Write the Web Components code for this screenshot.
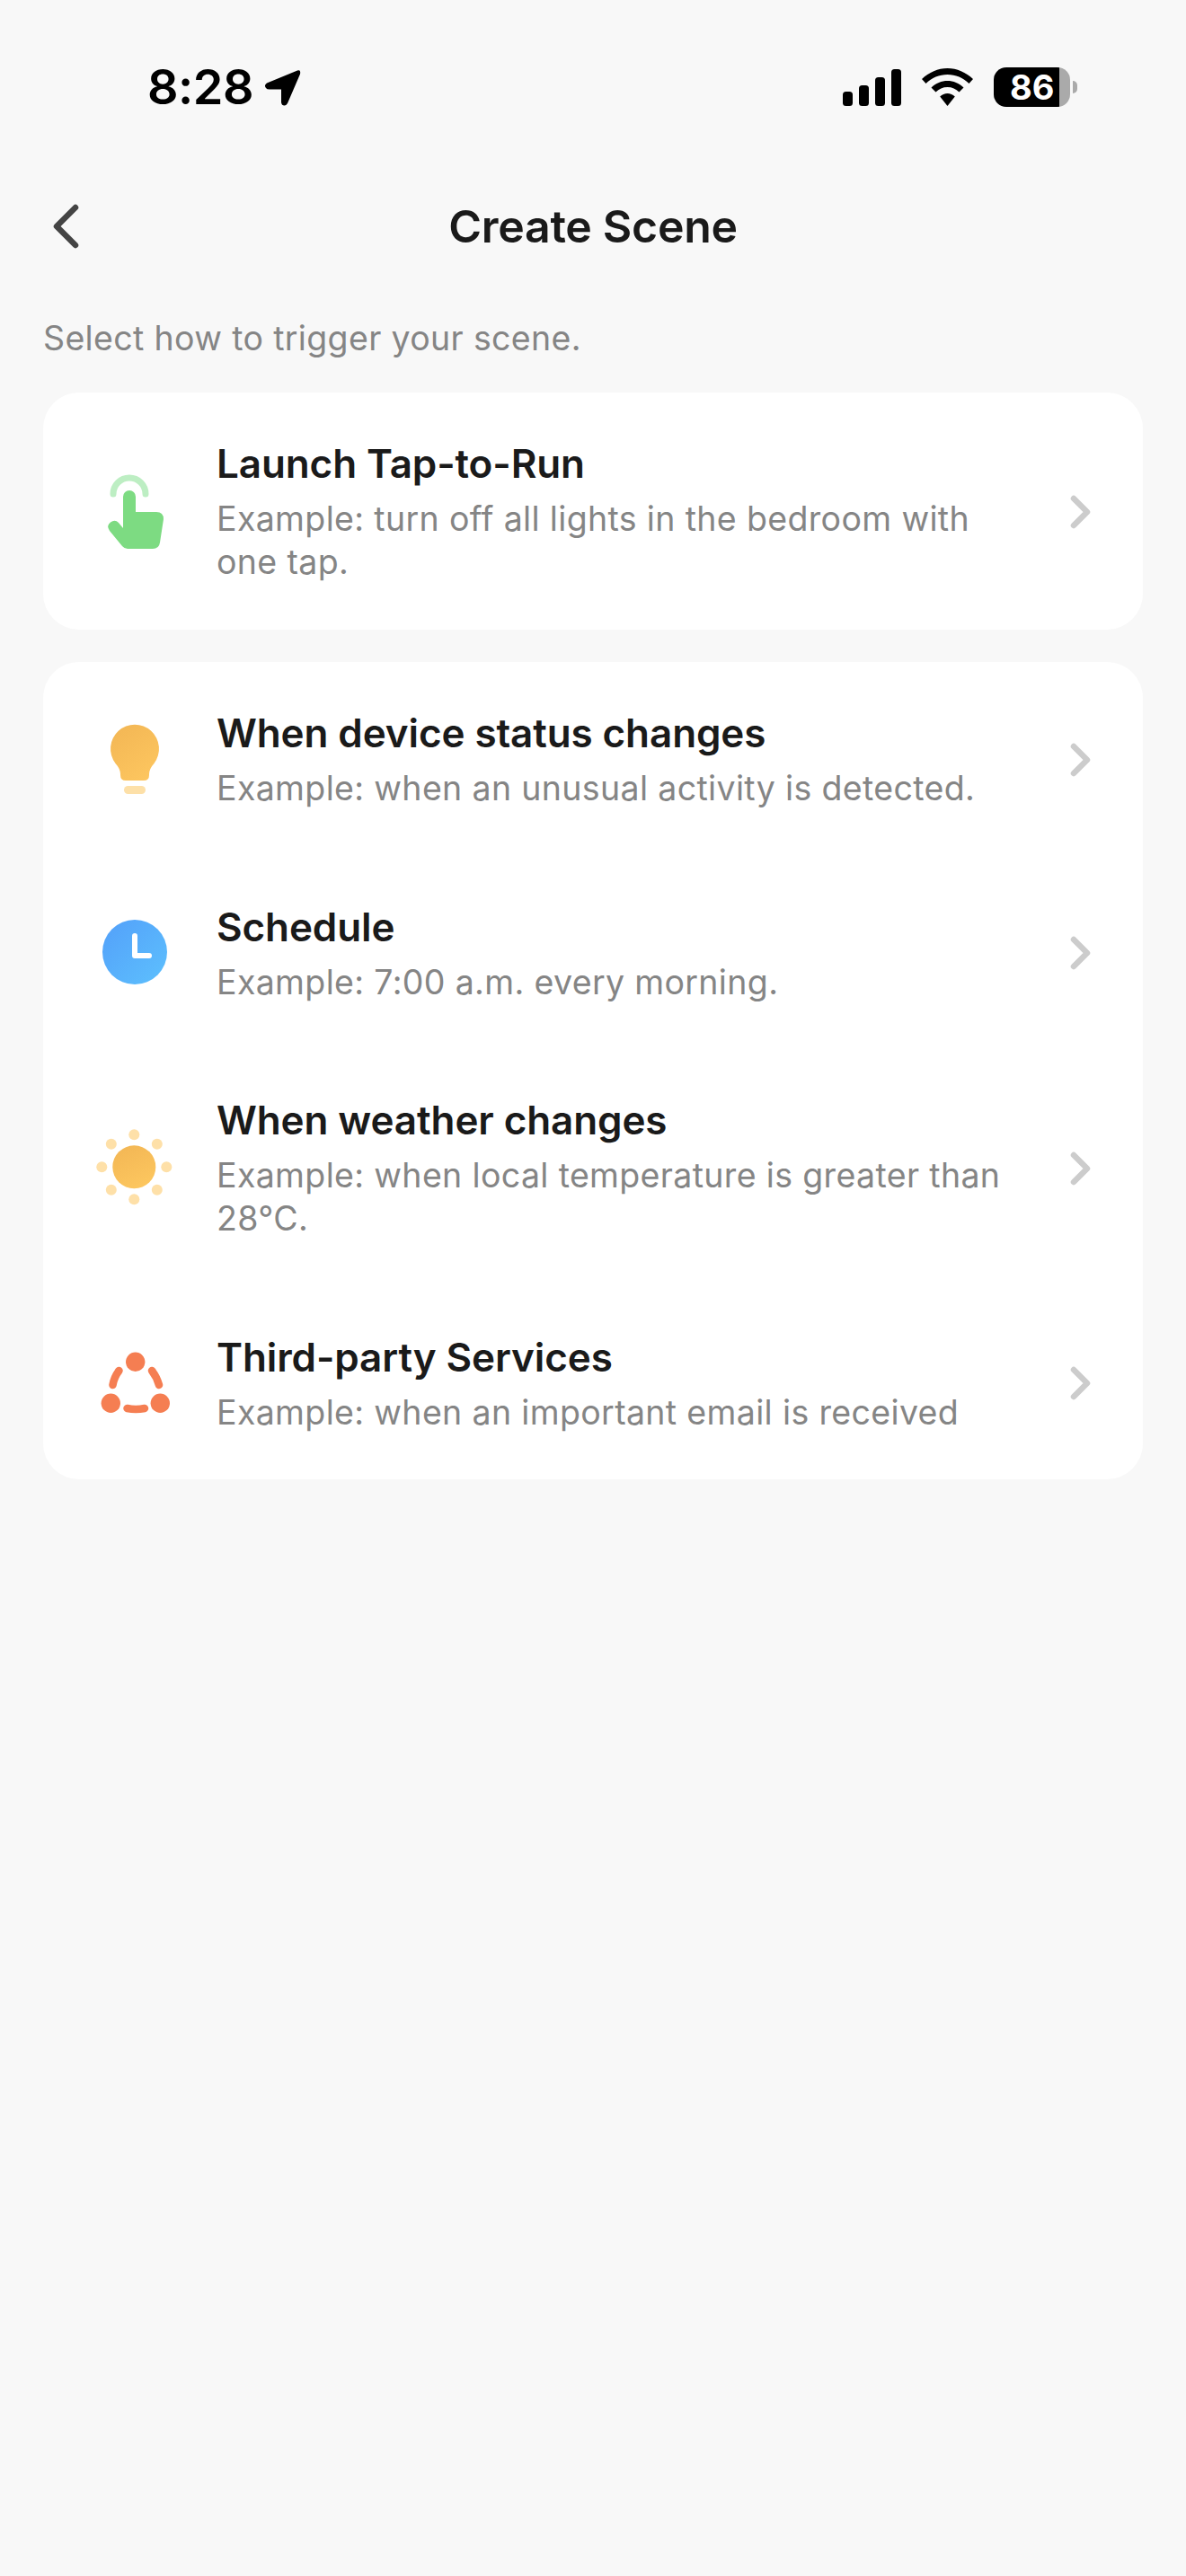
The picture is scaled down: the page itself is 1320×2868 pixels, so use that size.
<!DOCTYPE html>
<html>
<head>
<meta charset="utf-8">
<style>
  html, body { margin: 0; background: #f8f8f8; }
  body { font-family: Inter, "Liberation Sans", sans-serif; width: 1320px; min-height: 2868px; }
</style>
</head>
<body>
<status-bar time="8:28" battery="86"></status-bar>
<nav-bar title="Create Scene"></nav-bar>
<hint-text>Select how to trigger your scene.</hint-text>
<scene-card>
  <scene-row icon="tap" heading="Launch Tap-to-Run" desc="Example: turn off all lights in the bedroom with one tap."></scene-row>
</scene-card>
<scene-card class="second">
  <scene-row icon="bulb" heading="When device status changes" desc="Example: when an unusual activity is detected."></scene-row>
  <scene-row icon="clock" heading="Schedule" desc="Example: 7:00 a.m. every morning."></scene-row>
  <scene-row icon="sun" heading="When weather changes" desc="Example: when local temperature is greater than 28°C."></scene-row>
  <scene-row icon="third" heading="Third-party Services" desc="Example: when an important email is received"></scene-row>
</scene-card>

<script>
class StatusBar extends HTMLElement {
  connectedCallback() {
    this.attachShadow({ mode: 'open' });
    this.shadowRoot.innerHTML = `
      <style>
        :host { display: flex; align-items: center; justify-content: space-between; height: 194px; padding: 0 121px 0 164px; color: #000; }
        .left, .right { display: flex; align-items: center; }
        .time { font-size: 54px; font-weight: 600; letter-spacing: -0.5px; line-height: 1; }
        .arrow { margin-left: 12px; }
        .batt { display: flex; align-items: center; margin-left: 23px; }
        .level { width: 85px; height: 44px; border-radius: 14px; overflow: hidden; display: flex; box-sizing: border-box;
          background: linear-gradient(90deg, #000 86%, #aaa 86%); color: #fff; font-size: 38px; font-weight: 700; align-items: center; padding-left: 18px; }
        .nub { width: 5px; height: 14px; margin-left: 3px; background: #aaa; border-radius: 0 7px 7px 0; }
        .wifi { margin-left: 23px; }
      </style>
      <div class="left">
        <span class="time">${this.getAttribute('time')}</span>
        <svg class="arrow" width="41" height="41" viewBox="0 0 41 41"><path d="M37 1.500 L3 15.500 Q-0.500 18 2 21 Q3 22.500 6 22.500 L19 22.500 L19 37 Q19.500 40.500 22.500 40.500 Q24.500 40.500 26 38 L40 5.500 Q41 0 37 1.500Z" fill="#000"/></svg>
      </div>
      <div class="right">
        <svg width="65" height="41" viewBox="0 0 65 41">
          <rect x="0" y="25" width="11" height="16" rx="3.500"/>
          <rect x="18" y="18" width="11" height="23" rx="3.500"/>
          <rect x="36" y="9" width="11" height="32" rx="3.500"/>
          <rect x="54" y="0" width="11" height="41" rx="3.500"/>
        </svg>
        <svg class="wifi" width="57" height="42" viewBox="0 0 57 42">
          <path d="M28.500 0 C39 0 49 4.500 57 12 L52.500 17 C46 10.500 37.500 7 28.500 7 C19.500 7 11 10.500 4.500 17 L0 12 C8 4.500 18 0 28.500 0Z"/>
          <path d="M28.500 14 C35 14 41.500 16.500 46.500 21.500 L41.500 26.500 C38 23 33.500 21 28.500 21 C23.500 21 19 23 15.500 26.500 L10.500 21.500 C15.500 16.500 22 14 28.500 14Z"/>
          <path d="M28.500 28 C31.500 28 34.500 29.300 36.800 31.500 L28.500 42 L20.200 31.500 C22.500 29.300 25.500 28 28.500 28Z"/>
        </svg>
        <div class="batt">
          <div class="level">${this.getAttribute('battery')}</div>
          <div class="nub"></div>
        </div>
      </div>
    `;
  }
}

class NavBar extends HTMLElement {
  connectedCallback() {
    this.attachShadow({ mode: 'open' });
    this.shadowRoot.innerHTML = `
      <style>
        :host { display: flex; align-items: center; justify-content: center; height: 116px; position: relative; }
        h1 { margin: 0; font-size: 50px; font-weight: 600; color: #1a1a1a; letter-spacing: -0.3px; }
        svg { position: absolute; left: 56px; top: 30px; }
      </style>
      <svg width="36" height="56" viewBox="0 0 36 56"><path d="M28 7 L7 28 L28 49" fill="none" stroke="#444" stroke-width="6.500" stroke-linecap="round" stroke-linejoin="round"/></svg>
      <h1>${this.getAttribute('title')}</h1>
    `;
  }
}

class HintText extends HTMLElement {
  connectedCallback() {
    this.attachShadow({ mode: 'open' });
    this.shadowRoot.innerHTML = `
      <style>
        :host { display: block; height: 127px; padding: 43px 48px 0; box-sizing: border-box; color: #858585; font-size: 37.500px; letter-spacing: 0.35px; line-height: 48px; }
      </style>
      <slot></slot>
    `;
  }
}

class SceneCard extends HTMLElement {
  connectedCallback() {
    this.attachShadow({ mode: 'open' });
    this.shadowRoot.innerHTML = `
      <style>
        :host { display: block; margin: 0 48px 36.500px; background: #fff; border-radius: 40px; overflow: hidden; }
      </style>
      <slot></slot>
    `;
  }
}

const ICONS = {
  tap: `
    <path d="M26 30 A18 18 0 0 1 62 30" fill="none" stroke="#bdeec3" stroke-width="7" stroke-linecap="round"/>
    <path d="M37 33 A7 7 0 0 1 51 33 V50 H74 Q82 50 82 58 L78 84 Q77 91 70 91 H42 Q38.500 91 36 88 L22 71 Q18 65 23 61.500 Q28 58 32 62 L37 68Z" fill="#7ddb82"/>`,
  bulb: `
    <defs><linearGradient id="g" x1="0.200" y1="0" x2="0.800" y2="1"><stop offset="0" stop-color="#f3b755"/><stop offset="1" stop-color="#fdc65f"/></linearGradient></defs>
    <path d="M28.500 54 A27 27 0 1 1 71.500 54 Q66 60 66 66 V67 Q66 73 60 73 H40 Q34 73 34 67 V66 Q34 60 28.500 54Z" fill="url(#g)"/>
    <rect x="38" y="79" width="24" height="9" rx="4.500" fill="#fde0a8"/>`,
  clock: `
    <defs><linearGradient id="g" x1="0.100" y1="0.100" x2="0.900" y2="0.900"><stop offset="0" stop-color="#54a3fa"/><stop offset="1" stop-color="#5cbdfd"/></linearGradient></defs>
    <circle cx="50" cy="49" r="36" fill="url(#g)"/>
    <path d="M50 31 V53 H66" fill="none" stroke="#fff" stroke-width="6" stroke-linecap="round" stroke-linejoin="round"/>`,
  sun: `
    <defs><linearGradient id="g" x1="0.300" y1="0" x2="0.700" y2="1"><stop offset="0" stop-color="#f3b755"/><stop offset="1" stop-color="#fdc75f"/></linearGradient></defs>
    <circle cx="49.300" cy="48.300" r="24" fill="url(#g)"/>
    <g fill="#fee0a8">
      <circle cx="49.300" cy="12.300" r="6"/><circle cx="49.300" cy="84.300" r="6"/>
      <circle cx="13.300" cy="48.300" r="6"/><circle cx="85.300" cy="48.300" r="6"/>
      <circle cx="23.800" cy="22.800" r="6"/><circle cx="74.800" cy="22.800" r="6"/>
      <circle cx="23.800" cy="73.800" r="6"/><circle cx="74.800" cy="73.800" r="6"/>
    </g>`,
  third: `
    <g fill="#f57e52">
      <circle cx="50.700" cy="26.300" r="10.700"/><circle cx="23.300" cy="72.300" r="10.700"/><circle cx="78.300" cy="72.300" r="10.700"/>
    </g>
    <g fill="none" stroke="#f57e52" stroke-width="8.500" stroke-linecap="round">
      <path d="M32.500 36 Q27 43 25.500 52"/>
      <path d="M69 36 Q74.500 43 77 52"/>
      <path d="M41.500 78 Q51 80 61 78"/>
    </g>`
};

class SceneRow extends HTMLElement {
  connectedCallback() {
    this.attachShadow({ mode: 'open' });
    this.shadowRoot.innerHTML = `
      <style>
        :host { display: grid; grid-template-columns: 100px 950px 65px; align-items: center; padding: 48px 0 50.500px 52px; }
        .text { padding-left: 41px; }
        .head { font-size: 44px; line-height: 62px; font-weight: 600; color: #1a1a1a; letter-spacing: -0.1px; }
        .desc { font-size: 37.500px; letter-spacing: 0.35px; line-height: 48px; color: #858585; margin-top: 7px; }
        svg { display: block; }
        .icon, .chev { margin-top: 4px; }
        .chev { justify-self: end; }
      </style>
      <svg class="icon" width="100" height="100" viewBox="0 0 100 100">${ICONS[this.getAttribute('icon')]}</svg>
      <div class="text">
        <div class="head">${this.getAttribute('heading')}</div>
        <div class="desc">${this.getAttribute('desc')}</div>
      </div>
      <svg class="chev" width="24" height="40" viewBox="0 0 24 40"><path d="M4 5 L19 20 L4 35" fill="none" stroke="#ccc" stroke-width="6.500" stroke-linecap="round" stroke-linejoin="round"/></svg>
    `;
  }
}

customElements.define('status-bar', StatusBar);
customElements.define('nav-bar', NavBar);
customElements.define('hint-text', HintText);
customElements.define('scene-card', SceneCard);
customElements.define('scene-row', SceneRow);
</script>
</body>
</html>
